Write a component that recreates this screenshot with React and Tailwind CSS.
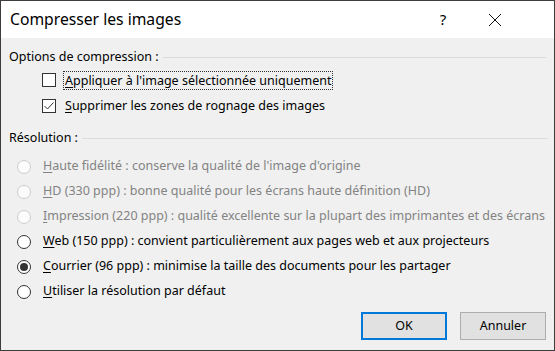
import React, { useState } from 'react';

function Checkbox({ checked }) {
  return (
    <span className="w-[14px] h-[14px] border border-[#333] bg-white flex items-center justify-center shrink-0">
      {checked && (
        <svg width="12" height="12" viewBox="0 0 12 12">
          <path d="M1.5 6 L4.5 9 L10.5 2.5" fill="none" stroke="#333" strokeWidth="1" />
        </svg>
      )}
    </span>
  );
}

function Radio({ checked, disabled }) {
  return (
    <span
      className={
        disabled
          ? 'w-[14px] h-[14px] rounded-full border border-[#cccccc] bg-[#fcfcfc] flex items-center justify-center shrink-0'
          : 'w-[14px] h-[14px] rounded-full border border-[#333] bg-white flex items-center justify-center shrink-0'
      }
    >
      {checked && <span className="w-[8px] h-[8px] rounded-full bg-[#333]" />}
    </span>
  );
}

const options = [
  { key: 'H', rest: "aute fidélité : conserve la qualité de l'image d'origine", disabled: true },
  { key: 'H', rest: 'D (330 ppp) : bonne qualité pour les écrans haute définition (HD)', disabled: true },
  { key: 'I', rest: 'mpression (220 ppp) : qualité excellente sur la plupart des imprimantes et des écrans', disabled: true },
  { key: 'W', rest: 'eb (150 ppp) : convient particulièrement aux pages web et aux projecteurs' },
  { key: 'C', rest: 'ourrier (96 ppp) : minimise la taille des documents pour les partager' },
  { key: 'U', rest: 'tiliser la résolution par défaut' },
];

export default function App() {
  const [selected, setSelected] = useState(4);

  return (
    <div
      className="w-[555px] h-[351px] border border-[#3c3c3c] bg-[#f0f0f0] flex flex-col text-[12.5px] text-black overflow-hidden"
      style={{ fontFamily: '"Noto Sans", "Open Sans", sans-serif' }}
    >
      <div className="h-[37px] bg-white flex items-center pl-[9px] shrink-0">
        <span className="text-[15.7px] flex-1">Compresser les images</span>
        <span className="text-[15px] w-[20px] text-center mr-[35px]">?</span>
        <svg width="14" height="14" viewBox="0 0 14 14" className="mr-[52px]">
          <path d="M1 1 L13 13 M13 1 L1 13" stroke="#111" strokeWidth="1" />
        </svg>
      </div>

      <div className="flex-1 flex flex-col">
        <div className="mt-[9px] h-[20px] flex items-center pl-[8px] pr-[8px] gap-[4px]">
          <span>Options de compression :</span>
          <span className="flex-1 h-px bg-[#dcdcdc]" />
        </div>

        <div className="h-[26px] flex items-center pl-[41px] gap-[7px]">
          <Checkbox />
          <span className="border border-dotted border-[#333] px-[1px] leading-[17px]">
            <u className="underline-offset-2">A</u>ppliquer à l'image sélectionnée uniquement
          </span>
        </div>
        <div className="h-[26px] flex items-center pl-[41px] gap-[8px]">
          <Checkbox checked />
          <span className="px-[1px]">
            <u className="underline-offset-2">S</u>upprimer les zones de rognage des images
          </span>
        </div>

        <div className="mt-[9px] h-[20px] flex items-center pl-[8px] pr-[6px] gap-[4px]">
          <span>Résolution :</span>
          <span className="flex-1 h-px bg-[#dcdcdc]" />
        </div>

        <div className="mt-[6px] flex flex-col">
          {options.map((o, i) => (
            <div
              key={i}
              className={
                o.disabled
                  ? 'h-[25px] flex items-center pl-[16px] gap-[12px] text-[#838383]'
                  : 'h-[25px] flex items-center pl-[16px] gap-[12px]'
              }
              onClick={() => !o.disabled && setSelected(i)}
            >
              <Radio checked={selected === i} disabled={o.disabled} />
              <span className="whitespace-nowrap">
                <u className="underline-offset-2">{o.key}</u>
                {o.rest}
              </span>
            </div>
          ))}
        </div>

        <div className="mt-[8px] flex justify-end gap-[13px] pr-[8px]">
          <button className="w-[86px] h-[28px] border-2 border-[#0078d7] bg-[#e1e1e1]">OK</button>
          <button className="w-[86px] h-[28px] border border-[#adadad] bg-[#e1e1e1]">Annuler</button>
        </div>
      </div>
    </div>
  );
}
